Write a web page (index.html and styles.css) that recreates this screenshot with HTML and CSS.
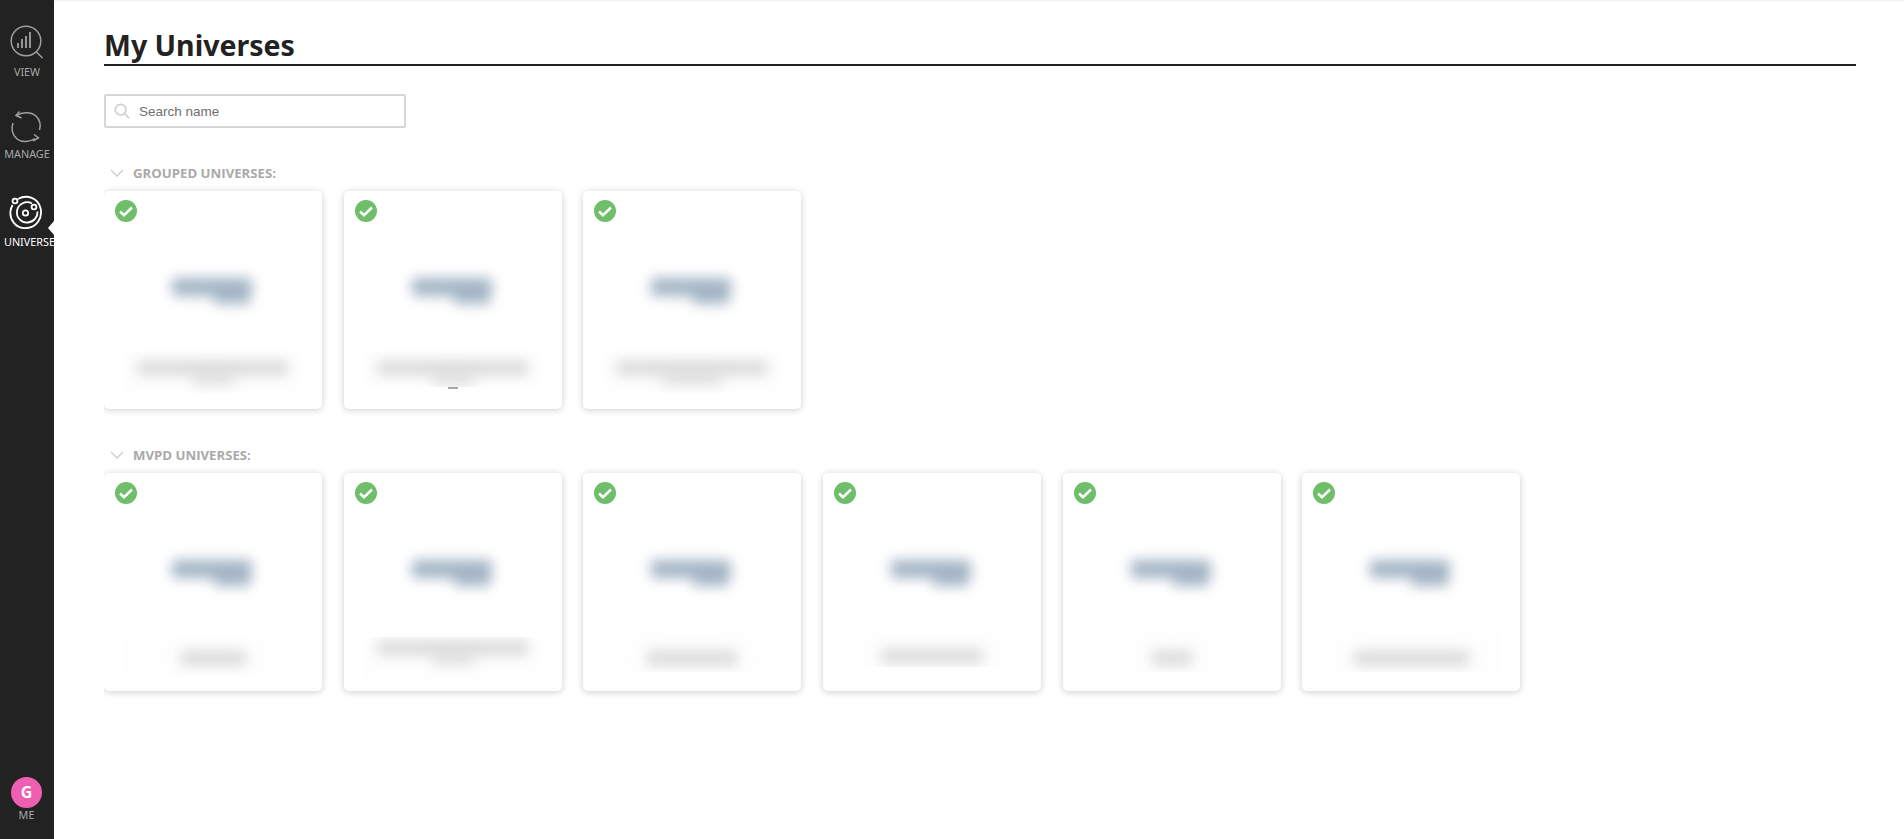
FILE: index.html
```html
<!DOCTYPE html>
<html lang="en">

<head>
    <meta charset="UTF-8" />
    <title>My Universes</title>
    <link rel="stylesheet" href="styles.css">
</head>

<body>
    <nav class="sidebar">
        <a class="nav-item nav-view">
            <svg class="nav-icon" viewBox="0 0 34 34" fill="none" stroke="#a0a0a0" stroke-width="1.5">
                <circle cx="16" cy="16" r="14.800" />
                <path d="M26.500 27l6 6" />
                <path d="M8 23v-5M12 23v-9M16 23v-12M20 23v-16" stroke-width="1.800" />
            </svg>
            <span>VIEW</span>
        </a>
        <a class="nav-item nav-manage">
            <svg class="nav-icon" viewBox="0 0 34 34" fill="none" stroke="#a0a0a0" stroke-width="1.5">
                <path d="M7 5.500C11 2.500 20 1 26 6c4 4 5 9 3.500 14" />
                <path d="M25 28.500C20 32 12 33 7 29 2 25 1 18 3 13" />
                <path d="M9.500 1.500L6 5.500l5.500 2.500" />
                <path d="M24 24.500l4.500 3.500-5.500 3" />
            </svg>
            <span>MANAGE</span>
        </a>
        <a class="nav-item nav-universes active">
            <svg class="nav-icon" viewBox="0 0 34 34" fill="none" stroke="#fff" stroke-width="1.800">
                <path d="M9 4C18-1 29 3 31.500 13c2.500 10-4 20-15 20.200C6 33.200 .5 24 1.500 16 2 13 3 11 3.500 10" />
                <circle cx="6" cy="6" r="2.400" />
                <path d="M23 8.500C17 5 9 9 8 16c-1 7 5 12 11 11.500 6-.5 10-6 9.500-11" />
                <circle cx="16.500" cy="18" r="2.700" />
                <circle cx="25" cy="12" r="2.400" />
            </svg>
            <span>UNIVERSES</span>
            <i class="nav-pointer"></i>
        </a>
        <a class="nav-item nav-me">
            <span class="avatar">G</span>
            <span>ME</span>
        </a>
    </nav>

    <main>
        <h1 class="page-title">My Universes</h1>

        <div class="search">
            <svg class="search-icon" viewBox="0 0 18 18" fill="none" stroke="#cfcfcf" stroke-width="1.800">
                <circle cx="7.500" cy="7.500" r="6" />
                <path d="M12 12l5 5" />
            </svg>
            <span>Search name</span>
        </div>

        <section class="group">
            <h2 class="group-head">
                <svg class="chevron" viewBox="0 0 14 8" fill="none" stroke="#d0d0d0" stroke-width="1.500">
                    <path d="M1 1l6 6 6-6" />
                </svg>
                GROUPED UNIVERSES:
            </h2>
            <div class="card-row">
                <div class="card">
                    <svg class="check" viewBox="0 0 22 22"><circle cx="11" cy="11" r="11" fill="#6fbe6a" /><path d="M5 11.500l4 3.700 8-7.700" fill="none" stroke="#fff" stroke-width="2.500" /></svg>
                    <div class="logo"></div>
                    <div class="caption caption-tall"><div class="line w150"></div><div class="line line-low w40"></div></div>
                </div>
                <div class="card">
                    <svg class="check" viewBox="0 0 22 22"><circle cx="11" cy="11" r="11" fill="#6fbe6a" /><path d="M5 11.500l4 3.700 8-7.700" fill="none" stroke="#fff" stroke-width="2.500" /></svg>
                    <div class="logo"></div>
                    <div class="caption caption-short"><div class="line w150"></div><div class="line line-low w40"></div></div>
                    <div class="leftover"></div>
                </div>
                <div class="card">
                    <svg class="check" viewBox="0 0 22 22"><circle cx="11" cy="11" r="11" fill="#6fbe6a" /><path d="M5 11.500l4 3.700 8-7.700" fill="none" stroke="#fff" stroke-width="2.500" /></svg>
                    <div class="logo"></div>
                    <div class="caption caption-tall"><div class="line w150"></div><div class="line line-low w60"></div></div>
                </div>
            </div>
        </section>

        <section class="group">
            <h2 class="group-head">
                <svg class="chevron" viewBox="0 0 14 8" fill="none" stroke="#d0d0d0" stroke-width="1.500">
                    <path d="M1 1l6 6 6-6" />
                </svg>
                MVPD UNIVERSES:
            </h2>
            <div class="card-row">
                <div class="card">
                    <svg class="check" viewBox="0 0 22 22"><circle cx="11" cy="11" r="11" fill="#6fbe6a" /><path d="M5 11.500l4 3.700 8-7.700" fill="none" stroke="#fff" stroke-width="2.500" /></svg>
                    <div class="logo"></div>
                    <div class="caption"><div class="line w65"></div></div>
                </div>
                <div class="card">
                    <svg class="check" viewBox="0 0 22 22"><circle cx="11" cy="11" r="11" fill="#6fbe6a" /><path d="M5 11.500l4 3.700 8-7.700" fill="none" stroke="#fff" stroke-width="2.500" /></svg>
                    <div class="logo"></div>
                    <div class="caption caption-two"><div class="line w150"></div><div class="line line-low w40"></div></div>
                </div>
                <div class="card">
                    <svg class="check" viewBox="0 0 22 22"><circle cx="11" cy="11" r="11" fill="#6fbe6a" /><path d="M5 11.500l4 3.700 8-7.700" fill="none" stroke="#fff" stroke-width="2.500" /></svg>
                    <div class="logo"></div>
                    <div class="caption caption-mid"><div class="line w90"></div></div>
                </div>
                <div class="card">
                    <svg class="check" viewBox="0 0 22 22"><circle cx="11" cy="11" r="11" fill="#6fbe6a" /><path d="M5 11.500l4 3.700 8-7.700" fill="none" stroke="#fff" stroke-width="2.500" /></svg>
                    <div class="logo"></div>
                    <div class="caption caption-clipped"><div class="line w100"></div></div>
                </div>
                <div class="card">
                    <svg class="check" viewBox="0 0 22 22"><circle cx="11" cy="11" r="11" fill="#6fbe6a" /><path d="M5 11.500l4 3.700 8-7.700" fill="none" stroke="#fff" stroke-width="2.500" /></svg>
                    <div class="logo"></div>
                    <div class="caption caption-mid"><div class="line w40"></div></div>
                </div>
                <div class="card">
                    <svg class="check" viewBox="0 0 22 22"><circle cx="11" cy="11" r="11" fill="#6fbe6a" /><path d="M5 11.500l4 3.700 8-7.700" fill="none" stroke="#fff" stroke-width="2.500" /></svg>
                    <div class="logo"></div>
                    <div class="caption caption-mid"><div class="line w115"></div></div>
                </div>
            </div>
        </section>
    </main>
</body>

</html>
```

FILE: styles.css
```css
* {
    box-sizing: border-box;
}

html,
body {
    height: 100%;
}

body {
    margin: 0;
    display: flex;
    overflow: hidden;
    background: #ffffff;
    font-family: "Open Sans", sans-serif;
}

/* Sidebar */
.sidebar {
    flex: 0 0 54px;
    width: 54px;
    display: flex;
    flex-direction: column;
    background: #222222;
    overflow: hidden;
}

.nav-item {
    position: relative;
    display: flex;
    flex-direction: column;
    align-items: center;
    gap: 6px;
    color: #a8a8a8;
    font-family: "Noto Sans", sans-serif;
    font-size: 10.8px;
    line-height: 14px;
    white-space: nowrap;
}

.nav-icon {
    width: 34px;
    height: 34px;
    margin-left: -1px;
}

.nav-view {
    margin-top: 25px;
}

.nav-manage {
    margin-top: 31px;
    gap: 3px;
}

.nav-universes {
    margin-top: 34px;
    align-items: flex-start;
    color: #ffffff;
}

.nav-universes .nav-icon {
    margin-left: 9px;
}

.nav-universes span {
    padding-left: 4px;
}

.nav-pointer {
    position: absolute;
    right: 0;
    top: 26px;
    border: 7px solid transparent;
    border-right: 6px solid #ffffff;
    border-left: 0;
}

.nav-me {
    margin-top: auto;
    margin-bottom: 17px;
    padding-right: 1px;
    gap: 0;
}

.avatar {
    width: 31px;
    height: 31px;
    border-radius: 50%;
    background: #ee5fb2;
    color: #ffffff;
    font-family: "Noto Sans", sans-serif;
    font-size: 16px;
    font-weight: 700;
    line-height: 31px;
    text-align: center;
}

/* Main content */
main {
    flex: 1;
    padding: 0 48px 0 50px;
    border-top: 2px solid #f6f6f6;
}

.page-title {
    height: 64px;
    margin: 0;
    padding-top: 24px;
    border-bottom: 2px solid #222222;
    color: #222222;
    font-family: "Noto Sans", sans-serif;
    font-size: 28.5px;
    font-weight: 700;
    line-height: 38px;
}

.search {
    display: flex;
    align-items: center;
    width: 302px;
    height: 34px;
    margin-top: 28px;
    padding-left: 8px;
    border: 2px solid #d6d6d6;
    border-radius: 2px;
    color: #6f6f6f;
    font-family: "Liberation Sans", sans-serif;
    font-size: 13.5px;
}

.search-icon {
    width: 16px;
    height: 16px;
    margin-right: 9px;
}

.group {
    margin-top: 36px;
}

.group + .group {
    margin-top: 37px;
}

.group-head {
    display: flex;
    align-items: center;
    height: 18px;
    margin: 0 0 9px;
    padding-left: 6px;
    color: #a9a9a9;
    font-size: 13.2px;
    font-weight: 700;
}

.chevron {
    width: 14px;
    height: 8px;
    margin-right: 9px;
}

.card-row {
    display: flex;
    gap: 21.700px;
    clip-path: inset(-20px -20px -20px 0);
}

.card {
    position: relative;
    display: flex;
    flex-direction: column;
    align-items: center;
    flex: 0 0 218px;
    height: 218px;
    padding-top: 87px;
    background: #ffffff;
    border-radius: 5px;
    box-shadow: 0 1px 7px rgba(0, 0, 0, 0.2);
}

.check {
    position: absolute;
    top: 9px;
    left: 11px;
    width: 22px;
    height: 22px;
}

/* Blurred logo and caption */
.logo {
    position: relative;
    width: 80px;
    height: 18px;
    margin-left: -2px;
    background: #a3b4c4;
    border-radius: 3px;
    filter: blur(6.500px);
}

.logo::after {
    position: absolute;
    right: 2px;
    bottom: -8px;
    width: 36px;
    height: 10px;
    background: #a3b4c4;
    content: "";
}

.caption {
    display: flex;
    flex-direction: column;
    align-items: center;
    width: 178px;
    height: 40px;
    margin-top: auto;
    margin-bottom: 14px;
    padding-top: 14px;
    background: #fefefe;
    overflow: hidden;
}

.caption-tall {
    height: 42px;
    margin-bottom: 16px;
    padding-top: 10px;
}

.caption-short {
    height: 36px;
    margin-bottom: 22px;
    padding-top: 10px;
}

.caption-two {
    height: 44px;
    margin-bottom: 10px;
    padding-top: 4px;
}

.caption-mid {
    margin-bottom: 19px;
    padding-top: 19px;
}

.caption-clipped {
    margin-bottom: 24px;
    padding-top: 22px;
}

.line {
    flex: none;
    height: 14px;
    background: #d8d8d8;
    filter: blur(6.500px);
}

.line-low {
    height: 9px;
    margin-top: 0;
}

.w40 { width: 40px; }
.w60 { width: 60px; }
.w65 { width: 65px; }
.w90 { width: 90px; }
.w100 { width: 100px; }
.w115 { width: 115px; }
.w150 { width: 150px; }

.leftover {
    position: absolute;
    top: 196px;
    left: 104px;
    width: 10px;
    height: 2px;
    background: #a8a8a8;
}
```
